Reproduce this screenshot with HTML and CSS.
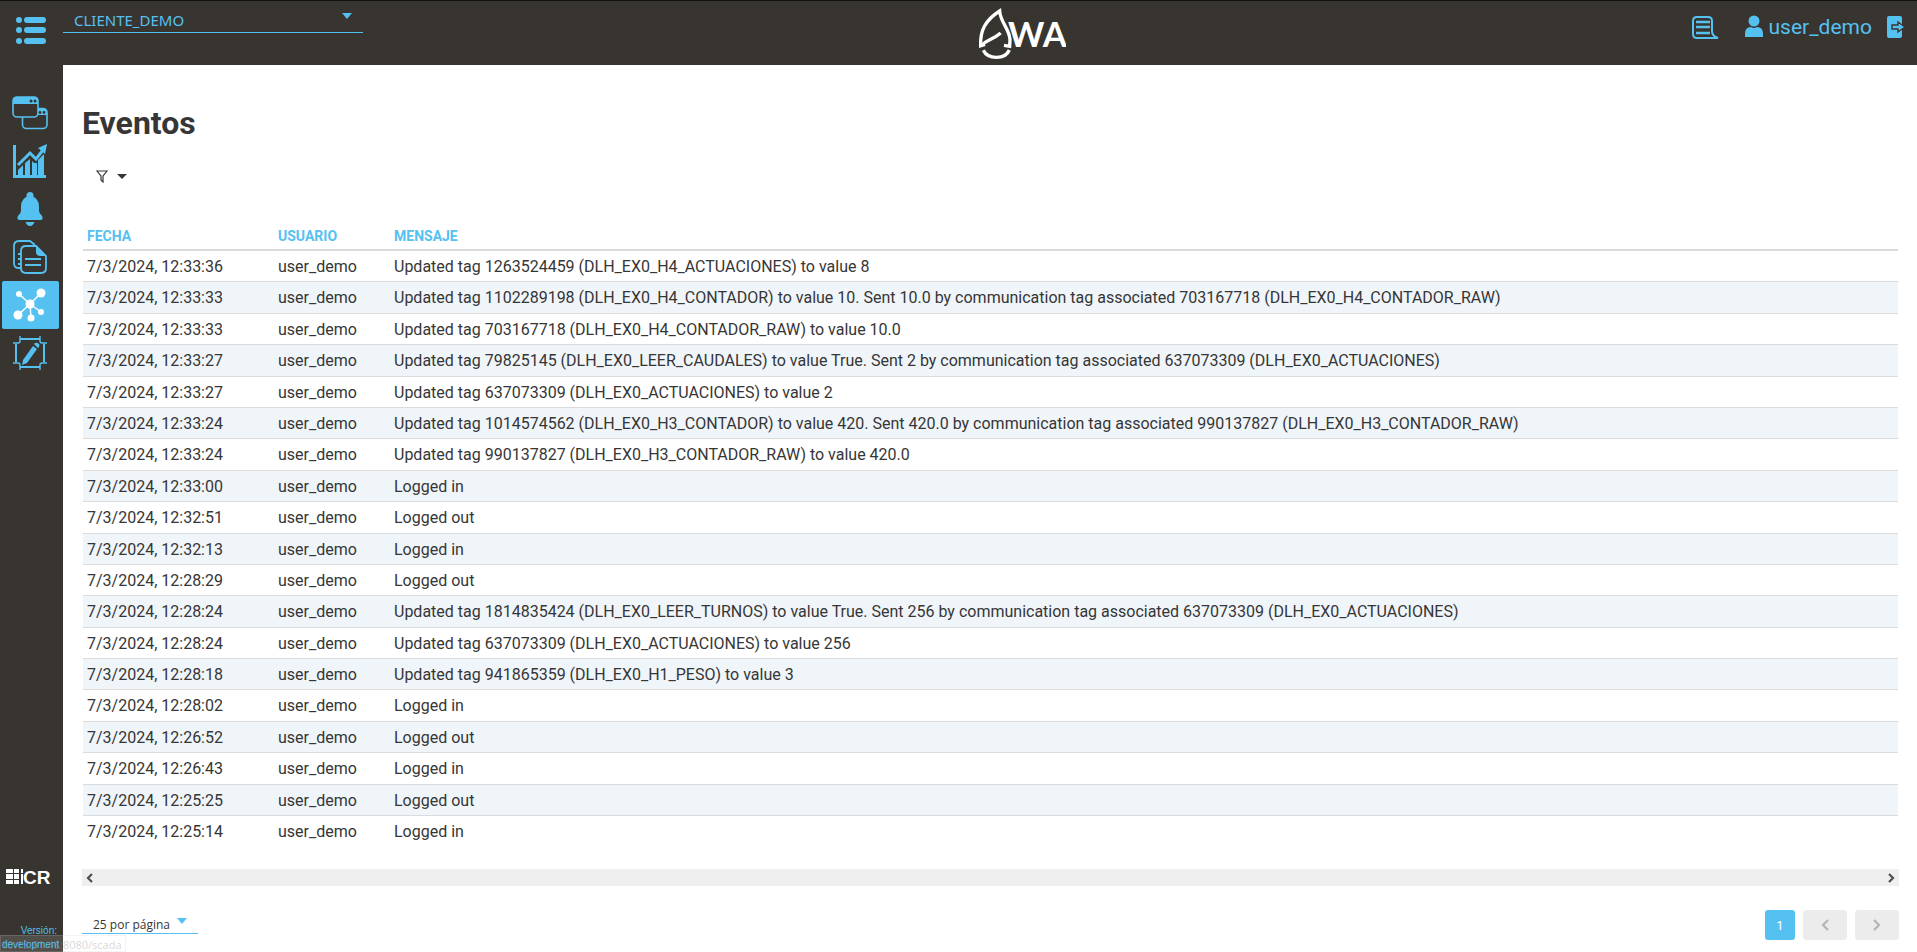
FILE: index.html
```
<!DOCTYPE html>
<html lang="es">
<head>
	<meta charset="utf-8">
	<title>Eventos</title>
	<link rel="stylesheet" href="styles.css">
</head>
<body>
	<header class="topbar">
		<button class="menu-btn" type="button" aria-label="Menú">
			<svg width="32" height="28" viewBox="0 0 32 28">
				<circle cx="4" cy="4" r="3"/><circle cx="4" cy="14" r="3"/><circle cx="4" cy="25" r="3"/>
				<rect x="9" y="1" width="22" height="6" rx="3"/><rect x="9" y="11" width="22" height="6" rx="3"/><rect x="9" y="22" width="22" height="6" rx="3"/>
			</svg>
		</button>
		<div class="client">
			<select class="client-select" aria-label="Cliente">
				<option>CLIENTE_DEMO</option>
			</select>
		</div>
		<svg class="logo" width="88" height="53" viewBox="54 18 264 159">
			<g fill="none" stroke="#fff" stroke-width="10">
				<path d="M75 130L62 134C60 90 75 58 119 30C121 64 148 82 150 116L149 136L132 133"/>
				<path d="M64 134C78 116 94 120 122 96"/>
				<path d="M70 148C84 177 136 176 148 147"/>
			</g>
			<text class="logo-text" x="144" y="137">WA</text>
		</svg>
		<div class="user">
			<button class="icon-btn log-btn" type="button" aria-label="Registro">
				<svg width="28" height="23" viewBox="0 0 28 23">
					<path d="M5 1H16Q20 1 20 5V15Q20 20 26 22H5Q1 22 1 18V5Q1 1 5 1Z" fill="none" stroke="#55c1f1" stroke-width="2"/>
					<path d="M4 6H18M4 11H18M4 17H18" stroke="#55c1f1" stroke-width="2.4"/>
				</svg>
			</button>
			<a class="user-link" href="#">
				<svg width="18" height="22" viewBox="0 0 18 22"><circle cx="9" cy="6" r="5.5"/><path d="M0 22V19Q0 12 6 12Q9 14 12 12Q18 12 18 19V22Z"/></svg>
				<span>user_demo</span>
			</a>
			<button class="icon-btn" type="button" aria-label="Salir">
				<svg width="18" height="22" viewBox="0 0 18 22">
					<path d="M2 0H13Q15 0 15 2V20Q15 22 13 22H2Q0 22 0 20V2Q0 0 2 0Z"/>
					<path d="M5 9H11V6L18 11L11 16V13H5Z" stroke="#38342f" stroke-width="1.4"/>
				</svg>
			</button>
		</div>
	</header>

	<div class="layout">
		<aside class="sidebar">
			<nav class="nav">
				<a class="nav-item" href="#" title="Ventanas">
					<svg width="36" height="34" viewBox="0 0 36 34">
						<rect x="10.500" y="12.500" width="24.500" height="20" rx="4" fill="none" stroke="#55c1f1" stroke-width="1.600"/>
						<path d="M26 12H31Q35 12 35 19H26Z"/>
						<rect x="1" y="1" width="25" height="20" rx="4" fill="#38342f" stroke="#55c1f1" stroke-width="1.600"/>
						<path d="M1 8V4Q1 1 4 1H23Q26 1 26 4V8Z"/>
						<g fill="#38342f"><circle cx="19" cy="5" r="1.500"/><circle cx="23" cy="5" r="1.500"/><circle cx="28" cy="16.500" r="1.400"/><circle cx="32" cy="16.500" r="1.400"/></g>
					</svg>
				</a>
				<a class="nav-item" href="#" title="Gráficas">
					<svg width="34" height="34" viewBox="0 0 34 34">
						<path d="M0 1H3V31H33V34H0Z"/>
						<path d="M5 26L10 21V32H5ZM12 19L17 15V32H12ZM19 17L21 19L24 19V32H19ZM25 16L31 10V32H25Z"/>
						<path d="M5 21L17 9L23 15L30 6" fill="none" stroke="#55c1f1" stroke-width="3"/>
						<path d="M25 4L34 0L32 10Z"/>
					</svg>
				</a>
				<a class="nav-item" href="#" title="Alarmas">
					<svg width="34" height="34" viewBox="0 0 34 34">
						<circle cx="17" cy="3.500" r="3.500"/>
						<path d="M8 15Q8 5 17 4Q26 5 26 15V19Q26 21 29 24Q31 28 27 28H7Q3 28 5 24Q8 21 8 19ZM12.500 30H21.500Q20 34 17 34Q14 34 12.500 30Z"/>
					</svg>
				</a>
				<a class="nav-item" href="#" title="Informes">
					<svg width="34" height="34" viewBox="0 0 34 34">
						<g fill="none" stroke="#55c1f1" stroke-width="1.800">
							<path d="M8 28H5Q1 28 1 23V6Q1 1 6 1H17L22 5"/>
							<path d="M13 6H23L33 16V28Q33 33 28 33H13Q8 33 8 28V11Q8 6 13 6Z"/>
							<path d="M5 14H8M5 19H8M5 24H8M12 19H28M12 25H28" stroke-width="2.200"/>
						</g>
						<path d="M23 5V13Q24 16 27 16H33Z"/>
					</svg>
				</a>
				<a class="nav-item active" href="#" title="Eventos">
					<svg width="34" height="34" viewBox="0 0 34 34" fill="#fff">
						<path d="M17 16L28 5M17 16L6 6M17 16L5 27M17 16L18 30M17 16L28 24" stroke="#fff" stroke-width="1.500"/>
						<circle cx="17" cy="16" r="4.500"/><circle cx="28" cy="5" r="4.500"/><circle cx="6" cy="6" r="3"/><circle cx="5" cy="27" r="4.500"/><circle cx="18" cy="30" r="3.500"/><circle cx="28" cy="24" r="3"/>
					</svg>
				</a>
				<a class="nav-item" href="#" title="Editor">
					<svg width="34" height="34" viewBox="0 0 34 34">
						<g fill="none" stroke="#55c1f1" stroke-width="2">
							<path d="M7 3H27M7 31H27M3 8V26M31 8V26"/>
							<path d="M7 0V5Q7 7 5 7H0M27 0V5Q27 7 29 7H34M7 34V29Q7 27 5 27H0M27 34V29Q27 27 29 27H34" stroke-width="1.400"/>
						</g>
						<path d="M20 10L24 13L14 27L9 29L10 24ZM21 8L22 7Q24 6 26 8Q27 9 26 11L25 12Z"/>
					</svg>
				</a>
			</nav>
			<div class="side-foot">
				<svg class="icr" width="50" height="20" viewBox="0 0 50 20" fill="#fff">
					<path d="M1 1H8V5H1ZM1 6H8V11H1ZM1 12H8V16H1ZM9 1H14V5H9ZM9 6H14V11H9ZM9 12H14V16H9ZM16 1H18V5H16ZM16 6H18V16H16Z"/>
					<text class="icr-text" x="18" y="16">CR</text>
				</svg>
				<p class="version">Versión:<br>development</p>
			</div>
		</aside>

		<main class="content">
			<h1 class="title">Eventos</h1>
			<button class="filter" type="button" aria-label="Filtrar">
				<svg width="12" height="13" viewBox="0 0 12 13"><path d="M1 1H11L7 6V12L5 10V6Z" fill="none" stroke="#363636" stroke-width="1.200"/></svg>
				<svg width="10" height="5" viewBox="0 0 10 5"><path d="M0 0H10L5 5Z" fill="#363636"/></svg>
			</button>

			<div class="table-wrap">
				<table class="events">
					<thead>
						<tr><th class="col-date">Fecha</th><th class="col-user">Usuario</th><th>Mensaje</th></tr>
					</thead>
					<tbody>
						<tr><td>7/3/2024, 12:33:36</td><td>user_demo</td><td>Updated tag 1263524459 (DLH_EX0_H4_ACTUACIONES) to value 8</td></tr>
						<tr><td>7/3/2024, 12:33:33</td><td>user_demo</td><td>Updated tag 1102289198 (DLH_EX0_H4_CONTADOR) to value 10. Sent 10.0 by communication tag associated 703167718 (DLH_EX0_H4_CONTADOR_RAW)</td></tr>
						<tr><td>7/3/2024, 12:33:33</td><td>user_demo</td><td>Updated tag 703167718 (DLH_EX0_H4_CONTADOR_RAW) to value 10.0</td></tr>
						<tr><td>7/3/2024, 12:33:27</td><td>user_demo</td><td>Updated tag 79825145 (DLH_EX0_LEER_CAUDALES) to value True. Sent 2 by communication tag associated 637073309 (DLH_EX0_ACTUACIONES)</td></tr>
						<tr><td>7/3/2024, 12:33:27</td><td>user_demo</td><td>Updated tag 637073309 (DLH_EX0_ACTUACIONES) to value 2</td></tr>
						<tr><td>7/3/2024, 12:33:24</td><td>user_demo</td><td>Updated tag 1014574562 (DLH_EX0_H3_CONTADOR) to value 420. Sent 420.0 by communication tag associated 990137827 (DLH_EX0_H3_CONTADOR_RAW)</td></tr>
						<tr><td>7/3/2024, 12:33:24</td><td>user_demo</td><td>Updated tag 990137827 (DLH_EX0_H3_CONTADOR_RAW) to value 420.0</td></tr>
						<tr><td>7/3/2024, 12:33:00</td><td>user_demo</td><td>Logged in</td></tr>
						<tr><td>7/3/2024, 12:32:51</td><td>user_demo</td><td>Logged out</td></tr>
						<tr><td>7/3/2024, 12:32:13</td><td>user_demo</td><td>Logged in</td></tr>
						<tr><td>7/3/2024, 12:28:29</td><td>user_demo</td><td>Logged out</td></tr>
						<tr><td>7/3/2024, 12:28:24</td><td>user_demo</td><td>Updated tag 1814835424 (DLH_EX0_LEER_TURNOS) to value True. Sent 256 by communication tag associated 637073309 (DLH_EX0_ACTUACIONES)</td></tr>
						<tr><td>7/3/2024, 12:28:24</td><td>user_demo</td><td>Updated tag 637073309 (DLH_EX0_ACTUACIONES) to value 256</td></tr>
						<tr><td>7/3/2024, 12:28:18</td><td>user_demo</td><td>Updated tag 941865359 (DLH_EX0_H1_PESO) to value 3</td></tr>
						<tr><td>7/3/2024, 12:28:02</td><td>user_demo</td><td>Logged in</td></tr>
						<tr><td>7/3/2024, 12:26:52</td><td>user_demo</td><td>Logged out</td></tr>
						<tr><td>7/3/2024, 12:26:43</td><td>user_demo</td><td>Logged in</td></tr>
						<tr><td>7/3/2024, 12:25:25</td><td>user_demo</td><td>Logged out</td></tr>
						<tr><td>7/3/2024, 12:25:14</td><td>user_demo</td><td>Logged in</td></tr>
					</tbody>
				</table>
			</div>

			<div class="hscroll">
				<button type="button" aria-label="Desplazar a la izquierda"><svg width="8" height="10" viewBox="0 0 8 10"><path d="M6 1L2 5L6 9" fill="none" stroke="#505050" stroke-width="2.200"/></svg></button>
				<button type="button" aria-label="Desplazar a la derecha"><svg width="8" height="10" viewBox="0 0 8 10"><path d="M2 1L6 5L2 9" fill="none" stroke="#505050" stroke-width="2.200"/></svg></button>
			</div>

			<div class="pager">
				<div class="page-size">
					<select class="size-select" aria-label="Filas por página">
						<option>25 por página</option>
					</select>
				</div>
				<div class="pages">
					<button class="page current" type="button">1</button>
					<button class="page arrow" type="button" aria-label="Anterior" disabled><svg width="10" height="14" viewBox="0 0 10 14"><path d="M8 2L3 7L8 12" fill="none" stroke="#b5b5b5" stroke-width="2.200"/></svg></button>
					<button class="page arrow" type="button" aria-label="Siguiente" disabled><svg width="10" height="14" viewBox="0 0 10 14"><path d="M2 2L7 7L2 12" fill="none" stroke="#b5b5b5" stroke-width="2.200"/></svg></button>
				</div>
			</div>
		</main>
	</div>
	<div class="status">10.15.51.46:8080/scada</div>
</body>
</html>
```

FILE: styles.css
```
*{
	box-sizing: border-box;
}
body{
	margin:0;
	min-height: 100vh;
	display: flex;
	flex-direction: column;
	font-family: Roboto, "Liberation Sans", sans-serif;
	font-size:16px;
	line-height: 1.15;
	color:#363636;
	background-color: #fff;
}
button{
	padding:0;
	border:0;
	background: none;
	font-family: inherit;
	cursor: pointer;
}
svg{
	display: block;
}
a{
	text-decoration: none;
}

/* top bar */
.topbar{
	display: flex;
	align-items: flex-start;
	justify-content: space-between;
	height:65px;
	padding-right: 12px;
	border-top: 1px solid #111;
	background-color: #38342f;
	fill:#55c1f1;
}
.menu-btn{
	width:63px;
	padding:15px 0 0 15px;
}
.client{
	position: relative;
	width:300px;
}
.client-select{
	width:100%;
	height:32px;
	padding:6px 11px 0;
	border:0;
	border-bottom: 1px solid #55c1f1;
	border-radius: 0;
	appearance: none;
	background: none;
	font-family: "Noto Sans", sans-serif;
	font-size:15px;
	color:#55c1f1;
}
.client::after,
.page-size::after{
	content:"";
	position: absolute;
	right:11px;
	top:12px;
	border:5px solid transparent;
	border-top: 6px solid #55c1f1;
	border-bottom: 0;
}
.logo{
	margin:6px auto 0;
}
.logo-text{
	font-family: Lato, sans-serif;
	font-size:104px;
	font-weight: bold;
	fill:#fff;
}
.user{
	display: flex;
	align-items: center;
	padding:14px 0 0 12px;
}
.log-btn{
	margin-right: 25px;
}
.user-link{
	display: flex;
	gap:5px;
	margin-right: 15px;
	font-size:21px;
	line-height: 24px;
	color:#55c1f1;
}

/* side menu */
.layout{
	display: flex;
	flex:1;
}
.sidebar{
	display: flex;
	flex-direction: column;
	justify-content: space-between;
	width:63px;
	padding:24px 2px 0;
	background-color: #38342f;
}
.nav-item{
	display: flex;
	align-items: center;
	justify-content: center;
	width:57px;
	height:48px;
	padding-right: 2px;
	border-radius: 2px;
	fill:#55c1f1;
}
.active{
	background-color: #55c1f1;
}
.icr{
	margin-left: 3px;
}
.icr-text{
	font-family: "Liberation Sans", sans-serif;
	font-size:19px;
	font-weight: bold;
}
.version{
	position: relative;
	z-index: 2;
	margin:36px 4px 0 0;
	font-family: "Liberation Sans", sans-serif;
	font-size:10px;
	line-height: 14px;
	text-align: right;
	color:#55c1f1;
}

/* content */
.content{
	flex:1;
	min-width: 0;
	padding:0 18px 12px 19px;
}
.title{
	margin:40px 0 0;
	font-size:32px;
	line-height: 36px;
}
.filter{
	display: flex;
	align-items: center;
	gap:9px;
	height:24px;
	margin:23px 0 0 14px;
}
.table-wrap{
	margin-top: 34px;
	padding:0 1px;
}
.events{
	width:100%;
	border-spacing: 0;
}
.events th{
	height:29px;
	padding:2px 4px 0;
	border-bottom: 2px solid #dbdbdb;
	font-size:14px;
	text-align: left;
	text-transform: uppercase;
	color:#55c1f1;
}
.col-date{
	width:191px;
}
.col-user{
	width:116px;
}
.events td{
	padding:7px 4px 5px;
	border-bottom: 1px solid #dbdbdb;
}
.events tbody tr:nth-child(even){
	background-color: #f0f5fa;
}
.events tbody tr:last-child td{
	border-bottom: 0;
}
.hscroll{
	display: flex;
	justify-content: space-between;
	height:17px;
	margin-top: 23px;
	padding:0 4px;
	background-color: #efefef;
}
.pager{
	display: flex;
	justify-content: space-between;
	align-items: flex-start;
	margin-top: 24px;
}
.page-size{
	position: relative;
	width:116px;
}
.page-size::after{
	top:8px;
}
.size-select{
	width:100%;
	height:24px;
	padding:6px 11px 0;
	border:0;
	border-bottom: 1px solid #55c1f1;
	border-radius: 0;
	appearance: none;
	background: none;
	font-family: "Open Sans", sans-serif;
	font-size:12px;
	color:#363636;
}
.pages{
	display: flex;
	gap:8px;
}
.page{
	display: flex;
	align-items: center;
	justify-content: center;
	width:30px;
	height:30px;
	border-radius: 3px;
	font-size:13px;
}
.current{
	background-color: #55c1f1;
	color:#fff;
}
.arrow{
	width:44px;
	background-color: #ececec;
}

/* link preview over the page corner */
.status{
	position: absolute;
	left:0;
	bottom:0;
	height:17px;
	width:126px;
	border:1px solid rgba(200,200,200,.2);
	background-color: rgba(255,255,255,.13);
	font-family: "Open Sans", sans-serif;
	font-size:11px;
	line-height: 17px;
	color:rgba(150,150,150,.4);
}
```
